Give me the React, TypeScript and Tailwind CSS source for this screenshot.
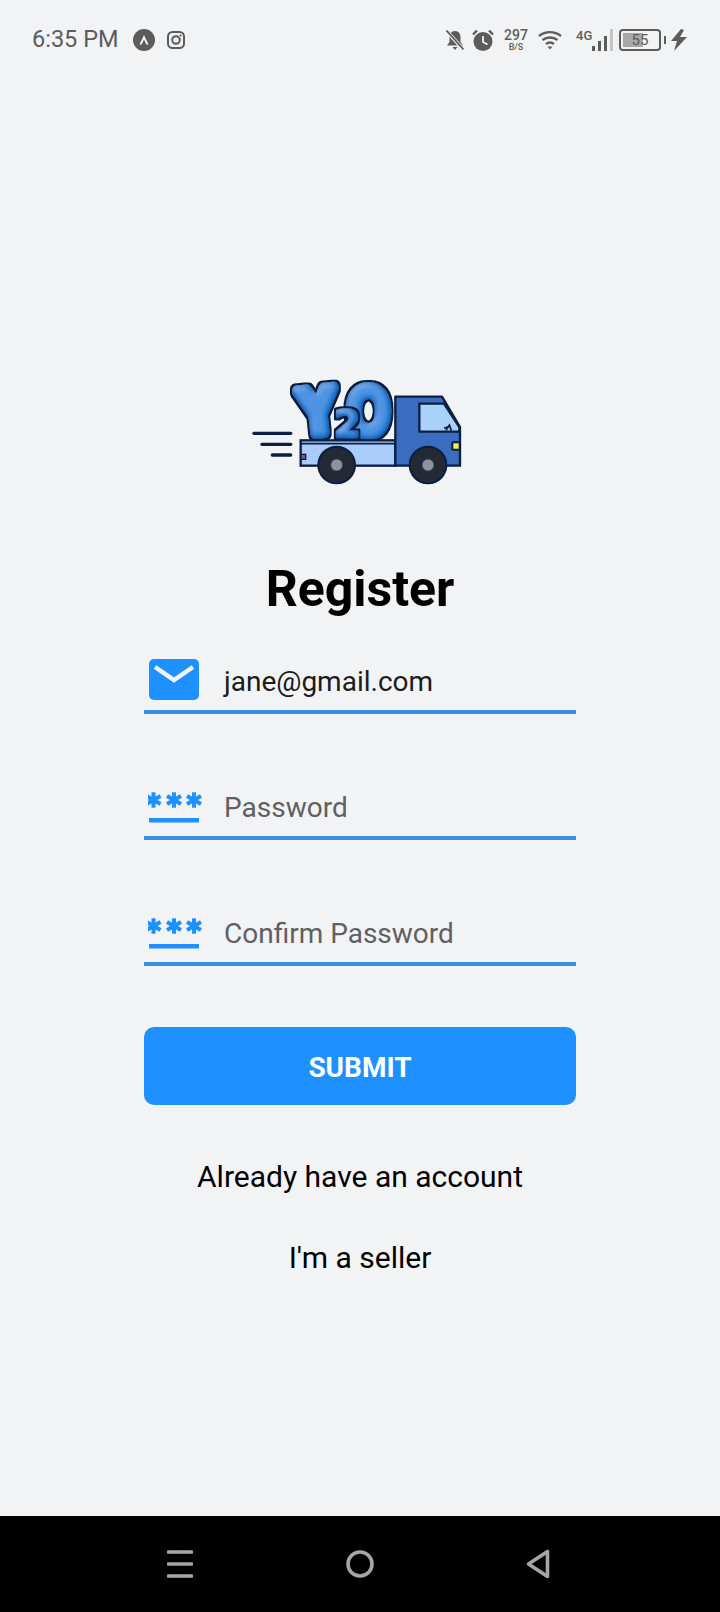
import React from "react";

const Stars = () => (
  <svg width="56" height="32" viewBox="0 0 56 32" className="shrink-0">
    {[5.5, 26, 46].map((x) => (
      <g key={x} stroke="#1e90ff" strokeWidth="4" strokeLinecap="butt">
        <line x1={x} y1={0.3} x2={x} y2={15.7} />
        <line x1={x - 7} y1={4} x2={x + 7} y2={12} />
        <line x1={x - 7} y1={12} x2={x + 7} y2={4} />
      </g>
    ))}
    <rect x="1" y="26" width="50" height="4.5" fill="#1e90ff" />
  </svg>
);

const Logo = () => (
  <svg width="240" height="130" viewBox="0 0 720 390" className="block">
    <defs>
      <filter id="bubble" x="-25%" y="-25%" width="150%" height="150%">
        <feMorphology in="SourceAlpha" operator="dilate" radius="6" result="d" />
        <feFlood floodColor="#0a1d3d" />
        <feComposite in2="d" operator="in" result="outline" />
        <feMorphology in="SourceAlpha" operator="erode" radius="3" result="e" />
        <feGaussianBlur in="e" stdDeviation="6" result="eb" />
        <feFlood floodColor="#123f8c" />
        <feComposite in2="eb" operator="out" result="rimAll" />
        <feComposite in="rimAll" in2="SourceAlpha" operator="in" result="rim" />
        <feGaussianBlur in="SourceAlpha" stdDeviation="9" result="b" />
        <feSpecularLighting in="b" surfaceScale="6" specularConstant="0.4" specularExponent="14" lightingColor="#9fd2ff" result="s">
          <feDistantLight azimuth="235" elevation="50" />
        </feSpecularLighting>
        <feComposite in="s" in2="SourceAlpha" operator="in" result="si" />
        <feMerge>
          <feMergeNode in="outline" />
          <feMergeNode in="SourceGraphic" />
          <feMergeNode in="rim" />
          <feMergeNode in="si" />
        </feMerge>
      </filter>
    </defs>
    <g stroke="#0b1f3f" strokeLinecap="round">
      <line x1="42" y1="205" x2="152" y2="205" strokeWidth="10" />
      <line x1="66" y1="238" x2="152" y2="238" strokeWidth="10" />
      <line x1="97" y1="270" x2="152" y2="270" strokeWidth="10" />
    </g>
    <g fontFamily="'DejaVu Sans', sans-serif" fontWeight="700" strokeLinejoin="round" textAnchor="middle">
      <g filter="url(#bubble)">
        <text x="0" y="0" fontSize="178" stroke="#2a82dc" strokeWidth="36" fill="#2a82dc" transform="translate(240 203) rotate(-6) scale(0.84 1)">Y</text>
      </g>
      <g filter="url(#bubble)">
        <text x="0" y="210" fontSize="198" stroke="#2a82dc" strokeWidth="24" fill="#2a82dc" transform="translate(385 0) scale(0.8 1)">O</text>
      </g>
      <g filter="url(#bubble)">
        <text x="322" y="216" fontSize="112" stroke="#2a82dc" strokeWidth="8" fill="#2a82dc">2</text>
      </g>
    </g>
    <rect x="182" y="226" width="284" height="76" fill="#a9ccfb" stroke="#0b1f3f" strokeWidth="7" />
    <line x1="182" y1="236" x2="466" y2="236" stroke="#0b1f3f" strokeWidth="5" />
    <rect x="183" y="268" width="14" height="15" fill="#7a5a8a" stroke="#0b1f3f" strokeWidth="4" />
    <path d="M466 95 H606 L660 186 V302 H466 Z" fill="#3a6cc0" stroke="#0b1f3f" strokeWidth="7" strokeLinejoin="round" />
    <path d="M538 116 H612 L658 186 V200 H538 Z" fill="#a9d2fb" stroke="#0b1f3f" strokeWidth="7" strokeLinejoin="round" />
    <path d="M618 196 L628 180 L634 196 M612 190 L632 182" fill="none" stroke="#0b1f3f" strokeWidth="5" />
    <rect x="637" y="232" width="22" height="22" rx="3" fill="#f6ee55" stroke="#0b1f3f" strokeWidth="6" />
    {[290, 564].map((x) => (
      <g key={x}>
        <circle cx={x} cy="300" r="55" fill="#232a36" stroke="#0b1f3f" strokeWidth="6" />
        <circle cx={x} cy="300" r="18" fill="#8f939b" stroke="#3a404c" strokeWidth="3" />
      </g>
    ))}
  </svg>
);

const C = "#5c5c5c";

const StatusBar = () => (
  <div className="h-[80px] shrink-0 flex items-center justify-between pl-[32px] pr-[32px] text-[#5c5c5c]">
    <div className="flex items-center">
      <span className="text-[23.5px] leading-none">6:35 PM</span>
      <svg width="22" height="22" viewBox="0 0 22 22" className="ml-[15px]">
        <circle cx="11" cy="11" r="11" fill={C} />
        <path d="M6.5 15.5 L11 6 L15.5 15.5 L13.3 15.5 L11 10.5 L8.7 15.5 Z" fill="#f2f3f5" />
      </svg>
      <svg width="18" height="18" viewBox="0 0 18 18" className="ml-[12px]" fill="none" stroke={C} strokeWidth="2">
        <rect x="1" y="1" width="16" height="16" rx="4.5" />
        <circle cx="9" cy="9" r="3.8" />
        <circle cx="13.6" cy="4.4" r="0.6" fill={C} strokeWidth="1" />
      </svg>
    </div>
    <div className="flex items-center">
      <svg width="18" height="21" viewBox="0 0 18 21">
        <path d="M9 1 C5 1 3.5 4 3.5 7.5 V12 L1 15.5 H17 L14.5 12 V7.5 C14.5 4 13 1 9 1 Z" fill={C} />
        <path d="M6.5 17 H11.5 L9 20 Z" fill={C} />
        <line x1="1" y1="1.5" x2="17" y2="19" stroke="#f2f3f5" strokeWidth="3.6" />
        <line x1="0.5" y1="0.5" x2="17.5" y2="19.5" stroke={C} strokeWidth="1.8" />
      </svg>
      <svg width="22" height="22" viewBox="0 0 22 22" className="ml-[8px]">
        <circle cx="11" cy="12.5" r="9.5" fill={C} />
        <path d="M11 7 V13 L15.5 15.5" stroke="#f2f3f5" strokeWidth="1.8" fill="none" />
        <path d="M1 5.5 L5 1.5 M21 5.5 L17 1.5" stroke={C} strokeWidth="2.4" />
      </svg>
      <div className="ml-[10px] w-[24px] flex flex-col items-center font-medium">
        <span className="text-[14px] leading-[13px]">297</span>
        <span className="text-[9px] leading-[10px]">B/S</span>
      </div>
      <svg width="24" height="20" viewBox="0 0 24 20" className="ml-[10px]" fill="none" stroke={C} strokeWidth="2.4">
        <path d="M1 6 C7.5 0.8 16.5 0.8 23 6" />
        <path d="M4.5 10 C9 6.6 15 6.6 19.5 10" />
        <path d="M8 14 C10.5 12.2 13.5 12.2 16 14" />
        <path d="M9.5 16.5 H14.5 L12 19.5 Z" fill={C} stroke="none" />
      </svg>
      <div className="ml-[14px] relative w-[37px] h-[22px]">
        <span className="absolute left-0 top-0 text-[13px] leading-[13px] font-medium">4G</span>
        <svg width="22" height="22" viewBox="0 0 22 22" className="absolute left-[16px] top-0">
          <rect x="0" y="17" width="3" height="5" fill={C} />
          <rect x="6" y="12" width="3" height="10" fill={C} />
          <rect x="12" y="7" width="3" height="15" fill={C} />
          <rect x="18" y="0" width="3" height="22" fill="#c4c4c4" />
        </svg>
      </div>
      <div className="ml-[6px] relative w-[42px] h-[22px] border-2 border-[#5c5c5c] rounded-[4px] flex items-center justify-center">
        <div className="absolute left-[2px] top-[2px] bottom-[2px] w-[20px] bg-[#a8a8a8]" />
        <span className="relative text-[15px] leading-none">55</span>
      </div>
      <div className="ml-[3px] w-[2px] h-[8px] bg-[#5c5c5c]" />
      <svg width="18" height="22" viewBox="0 0 18 22" className="ml-[4px]">
        <path d="M11 0 L1 12 H7 L4 22 L17 8 H10 L14 1 Z" fill={C} />
      </svg>
    </div>
  </div>
);

const Field = ({ icon, value, placeholder }: { icon: React.ReactNode; value?: string; placeholder?: string }) => (
  <div className="h-[60px] flex items-center border-b-[4px] border-[#3a8ee6] pl-[4px]">
    <div className="w-[76px] shrink-0 flex items-center">{icon}</div>
    <span className={value ? "text-[28px] leading-none text-[#1c1c1c]" : "text-[28px] leading-none text-[#5f6064]"}>
      {value ?? placeholder}
    </span>
  </div>
);

export default function App() {
  return (
    <div className="w-[720px] h-[1612px] flex flex-col bg-[#f2f3f5] font-['Roboto',sans-serif] overflow-hidden">
      <StatusBar />
      <main className="flex-1 flex flex-col items-center pt-[285px]">
        <Logo />
        <h1 className="mt-[66px] text-[50px] leading-[56px] font-bold text-black">Register</h1>
        <div className="mt-[37px] w-[432px] flex flex-col gap-[66px]">
          <Field
            value="jane@gmail.com"
            icon={
              <svg width="50" height="41" viewBox="0 0 50 41" className="ml-[1px] mb-[6px]">
                <rect width="50" height="41" rx="5" fill="#1e90ff" />
                <path d="M6 8 L25 21 L44 8" fill="none" stroke="#f2f3f5" strokeWidth="4.5" />
              </svg>
            }
          />
          <Field placeholder="Password" icon={<Stars />} />
          <Field placeholder="Confirm Password" icon={<Stars />} />
        </div>
        <button className="mt-[61px] w-[432px] h-[78px] rounded-[10px] bg-[#1e90ff] pt-[3px] text-white text-[28px] font-bold">
          SUBMIT
        </button>
        <p className="mt-[52px] text-[30px] leading-[40px] text-black">Already have an account</p>
        <p className="mt-[41px] text-[30px] leading-[40px] text-black">I'm a seller</p>
      </main>
      <nav className="h-[96px] shrink-0 bg-black flex items-center">
        <div className="w-[720px] flex items-center justify-between pl-[167px] pr-[170px]">
          <svg width="26" height="28" viewBox="0 0 26 28" stroke="#a6a6a6" strokeWidth="3.6" strokeLinecap="round">
            <line x1="1.5" y1="2" x2="24.5" y2="2" />
            <line x1="1.5" y1="14" x2="24.5" y2="14" />
            <line x1="1.5" y1="26" x2="24.5" y2="26" />
          </svg>
          <svg width="28" height="28" viewBox="0 0 28 28" fill="none" stroke="#a6a6a6" strokeWidth="3.6">
            <circle cx="14" cy="14" r="12" />
          </svg>
          <svg width="24" height="30" viewBox="0 0 24 30" fill="none" stroke="#a6a6a6" strokeWidth="3.6" strokeLinejoin="round">
            <path d="M2.5 15 L21.5 2.5 V27.5 Z" />
          </svg>
        </div>
      </nav>
    </div>
  );
}
